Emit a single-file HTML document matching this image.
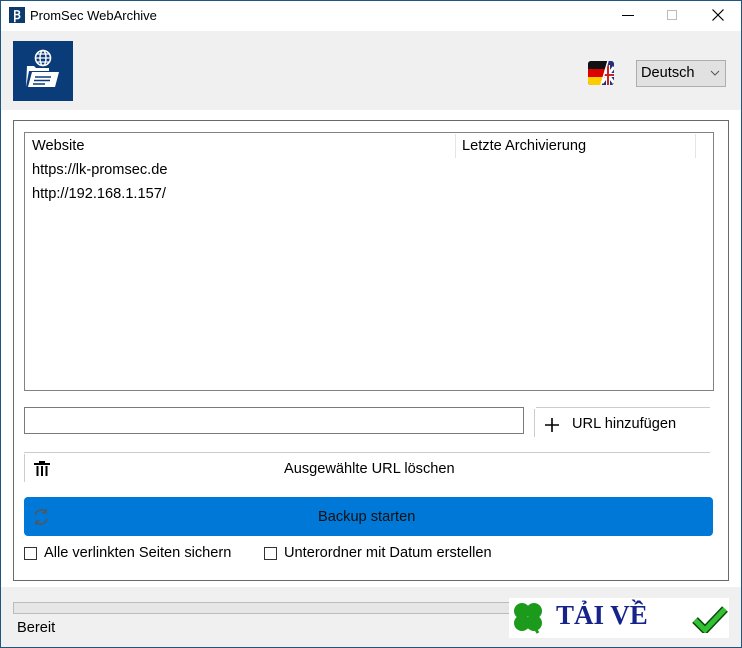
<!DOCTYPE html>
<html><head><meta charset="utf-8"><style>
*{box-sizing:border-box;margin:0;padding:0}
body{width:742px;height:648px;overflow:hidden;font-family:"Segoe UI","Liberation Sans",sans-serif;font-size:14.6px;color:#000;background:#fff;position:relative}
.win{position:absolute;left:0;top:0;width:742px;height:648px;border:1px solid #1d5680}
.abs{position:absolute}
</style></head><body>
<div class="win"></div>
<div class="abs" style="left:1px;top:1px;width:740px;height:30px;background:#fff"></div>
<div class="abs" style="left:9px;top:7px;width:16px;height:16px;background:#0b3a6e;color:#fff;font-size:12px;font-weight:bold;line-height:16px;text-align:center">Ꞵ</div>
<div class="abs" style="left:30px;top:8px;font-size:13px">PromSec WebArchive</div>
<div class="abs" style="left:622px;top:15px;width:12px;height:1px;background:#000"></div>
<div class="abs" style="left:667px;top:10px;width:10px;height:10px;border:1px solid #bbb"></div>
<svg class="abs" style="left:712px;top:9px" width="12" height="12"><path d="M0.5 0.5L11.5 11.5M11.5 0.5L0.5 11.5" stroke="#000" stroke-width="1.2"/></svg>
<div class="abs" style="left:1px;top:31px;width:740px;height:79px;background:#f0f0f0"></div>
<div class="abs" style="left:13px;top:41px;width:60px;height:60px;background:#0a3c7a"></div>
<svg class="abs" style="left:13px;top:41px" width="60" height="60">
<circle cx="30" cy="17" r="7.5" fill="none" stroke="#fff" stroke-width="1.6"/>
<ellipse cx="30" cy="17" rx="3" ry="7.5" fill="none" stroke="#fff" stroke-width="1.4"/>
<path d="M22.5 17H37.5M24 13H36M24 21H36" stroke="#fff" stroke-width="1.3"/>
<path d="M14 25h7l2 2h13v3h-20l-3 16h-0z" fill="#fff"/>
<path d="M19 31h27l-4 15h-27z" fill="#fff"/>
<path d="M22 36h16M21 39.5h16M20 43h12" stroke="#0a3c7a" stroke-width="1.4"/>
</svg>
<svg class="abs" style="left:588px;top:61px" width="26" height="24" viewBox="0 0 26 24">
<defs><clipPath id="c"><rect x="0" y="0" width="26" height="24" rx="3"/></clipPath></defs>
<g clip-path="url(#c)">
<rect x="0" y="0" width="26" height="24" fill="#24307a"/>
<path d="M20 0H26V24H13Z" fill="#24307a"/>
<path d="M14 6L26 22M26 6L14 22" stroke="#fff" stroke-width="3"/>
<path d="M14 14H26M20 4V24" stroke="#fff" stroke-width="4"/>
<path d="M14 14H26M20 4V24" stroke="#c22" stroke-width="2"/>
<path d="M0 0H20L13 24H0Z" fill="#111"/>
<path d="M0 8H17.8L15.6 16H0Z" fill="#d00"/>
<path d="M0 16H15.6L13 24H0Z" fill="#fc0"/>
<path d="M20 0L13 24" stroke="#fff" stroke-width="1.5"/>
</g>
</svg>
<div class="abs" style="left:636px;top:60px;width:90px;height:27px;background:#e1e1e1;border:1px solid #adadad;padding:4px 0 0 4px">Deutsch</div>
<svg class="abs" style="left:710px;top:70px" width="10" height="6"><path d="M1 1L5 5L9 1" fill="none" stroke="#555" stroke-width="1"/></svg>
<div class="abs" style="left:13px;top:120px;width:716px;height:461px;border:1px solid #6a6a6a;background:#fff"></div>
<div class="abs" style="left:24px;top:132px;width:690px;height:259px;border:1px solid #828282"></div>
<div class="abs" style="left:455px;top:134px;width:1px;height:24px;background:#e5e5e5"></div>
<div class="abs" style="left:695px;top:134px;width:1px;height:24px;background:#e5e5e5"></div>
<div class="abs" style="left:32px;top:138px">Website</div>
<div class="abs" style="left:462px;top:138px">Letzte Archivierung</div>
<div class="abs" style="left:32px;top:162px">https://lk-promsec.de</div>
<div class="abs" style="left:32px;top:186px">http://192.168.1.157/</div>
<div class="abs" style="left:24px;top:407px;width:500px;height:27px;border:1px solid #7a7a7a"></div>
<div class="abs" style="left:536px;top:407px;width:174px;height:1px;background:#ccc"></div>
<div class="abs" style="left:534px;top:409px;width:1px;height:28px;background:#ccc"></div>
<svg class="abs" style="left:544px;top:417px" width="16" height="16"><path d="M8 1V15M1 8H15" stroke="#000" stroke-width="1.6"/></svg>
<div class="abs" style="left:572px;top:416px">URL hinzufügen</div>
<div class="abs" style="left:24px;top:452px;width:686px;height:1px;background:#ccc"></div>
<div class="abs" style="left:24px;top:454px;width:1px;height:28px;background:#ccc"></div>
<svg class="abs" style="left:33px;top:461px" width="18" height="16"><path d="M1 3H17M6 1H12" stroke="#000" stroke-width="2"/><path d="M4.5 5V15M9 5V15M13.5 5V15" stroke="#000" stroke-width="2"/></svg>
<div class="abs" style="left:284px;top:461px">Ausgewählte URL löschen</div>
<div class="abs" style="left:24px;top:497px;width:689px;height:39px;background:#0078d7;border-radius:4px"></div>
<svg class="abs" style="left:31px;top:507px" width="20" height="20"><path d="M4 8A6.5 6.5 0 0 1 15 5M16 12A6.5 6.5 0 0 1 5 15" fill="none" stroke="#555" stroke-width="1.6"/><path d="M15 2V6H11M5 18V14H9" fill="none" stroke="#555" stroke-width="1.3"/></svg>
<div class="abs" style="left:318px;top:509px;color:#111">Backup starten</div>
<div class="abs" style="left:24px;top:547px;width:13px;height:13px;border:1px solid #333"></div>
<div class="abs" style="left:44px;top:545px">Alle verlinkten Seiten sichern</div>
<div class="abs" style="left:264px;top:547px;width:13px;height:13px;border:1px solid #333"></div>
<div class="abs" style="left:284px;top:545px">Unterordner mit Datum erstellen</div>
<div class="abs" style="left:1px;top:587px;width:740px;height:60px;background:#f0f0f0"></div>
<div class="abs" style="left:13px;top:602px;width:500px;height:12px;background:#e6e6e6;border:1px solid #bcbcbc"></div>
<div class="abs" style="left:17px;top:620px">Bereit</div>
<div class="abs" style="left:509px;top:598px;width:220px;height:40px;background:#fff"></div>
<svg class="abs" style="left:510px;top:600px" width="36" height="36"><g fill="#1c9a1c"><circle cx="12" cy="11" r="8"/><circle cx="24" cy="11" r="8"/><circle cx="12" cy="23" r="8"/><circle cx="24" cy="23" r="8"/></g><path d="M18 17L28 33" stroke="#1c9a1c" stroke-width="3"/></svg>
<div class="abs" style="left:556px;top:600px;font-family:'Liberation Serif',serif;font-weight:bold;font-size:27px;color:#16238a">TẢI VỀ</div>
<svg class="abs" style="left:692px;top:605px" width="36" height="28"><path d="M3 15L13 25L33 4" fill="none" stroke="#0a4a0a" stroke-width="8"/><path d="M3 15L13 25L33 4" fill="none" stroke="#33c033" stroke-width="5"/></svg>
</body></html>
